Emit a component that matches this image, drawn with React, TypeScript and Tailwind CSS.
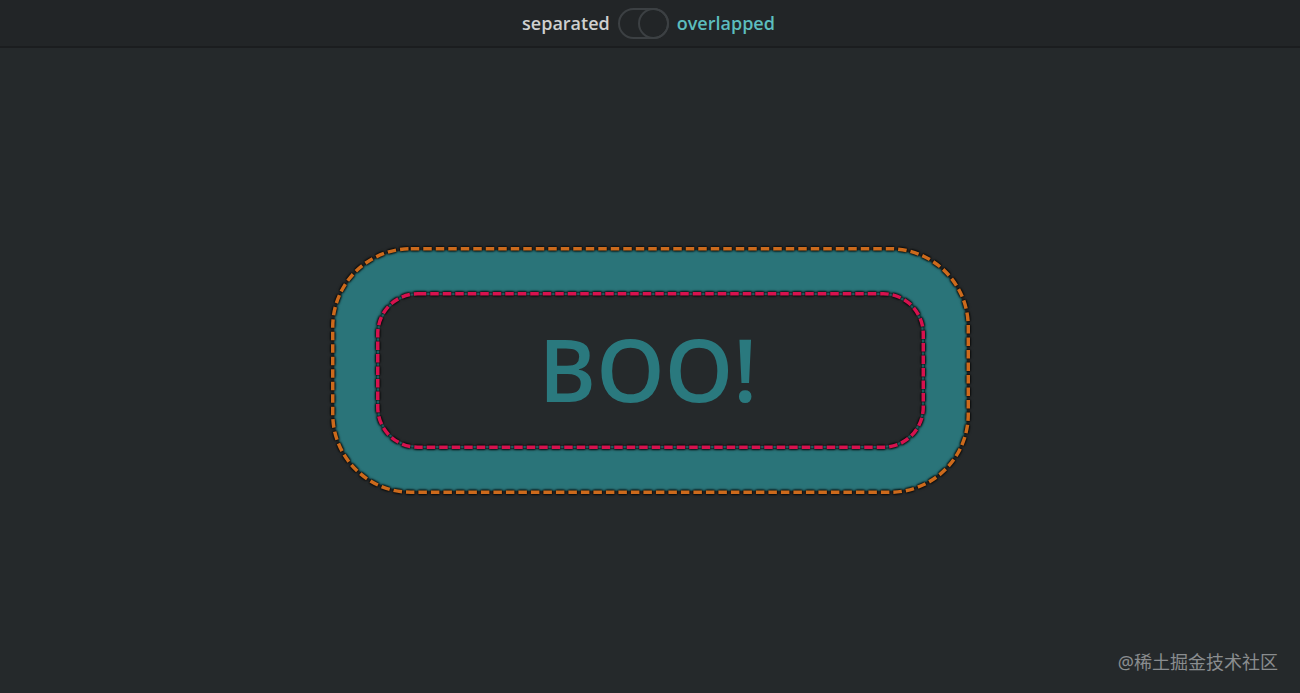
function DashRing({ w, h, r, color }: { w: number; h: number; r: number; color: string }) {
  return (
    <svg
      className="absolute left-[-3px] top-[-3px] pointer-events-none"
      width={w}
      height={h}
      viewBox={`0 0 ${w} ${h}`}
      style={{ filter: 'drop-shadow(0 0 1.2px #000) drop-shadow(0 0 1px rgba(0,0,0,0.8))' }}
    >
      <rect
        x={1.75}
        y={1.75}
        width={w - 3.5}
        height={h - 3.5}
        rx={r}
        ry={r}
        fill="none"
        stroke={color}
        strokeWidth={3.5}
        strokeDasharray="8.5 4"
      />
    </svg>
  );
}

export default function App() {
  return (
    <div className="w-[1300px] h-[693px] bg-[#25292b] flex flex-col relative overflow-hidden" style={{ fontFamily: '"Open Sans", sans-serif' }}>
      <header className="h-[48px] shrink-0 bg-[#222527] border-b-2 border-[#1b1d1f] flex items-center justify-center gap-[8px]">
        <span className="text-[18px] font-semibold text-[#cfd0d0] leading-none ml-[-3px]">separated</span>
        <div className="relative w-[51px] h-[31px] rounded-full border-2 border-[#3c4043]">
          <div className="absolute right-[-2px] top-[-2px] w-[31px] h-[31px] rounded-full border-2 border-[#3c4043]" />
        </div>
        <span className="text-[18px] font-semibold text-[#5cbdbe] leading-none">overlapped</span>
      </header>
      <main className="flex-1 flex items-start justify-center pt-[199px]">
        <div className="relative w-[639px] h-[247px] rounded-[80px] border-[3px] border-transparent bg-[#2a7479] bg-clip-padding p-[42px] shadow-[inset_0_0_3px_rgba(0,0,0,0.7)]">
          <DashRing w={639} h={247} r={78} color="#cc6a1c" />
          <div className="relative w-full h-full rounded-[42px] border-[3px] border-transparent bg-[#25292b] bg-clip-padding flex items-center justify-center shadow-[0_0_3px_rgba(0,0,0,0.7)]">
            <DashRing w={549} h={157} r={40} color="#d6124e" />
            <span className="text-[87px] font-semibold text-[#2a797e] leading-none mt-[-4px] ml-[-4px]">BOO!</span>
          </div>
        </div>
      </main>
      <div className="absolute right-[22px] bottom-[22px] text-[18px] text-[#8a8d8f] leading-none" style={{ fontFamily: '"Noto Sans", "Noto Sans CJK SC", sans-serif' }}>
        @稀土掘金技术社区
      </div>
    </div>
  );
}
